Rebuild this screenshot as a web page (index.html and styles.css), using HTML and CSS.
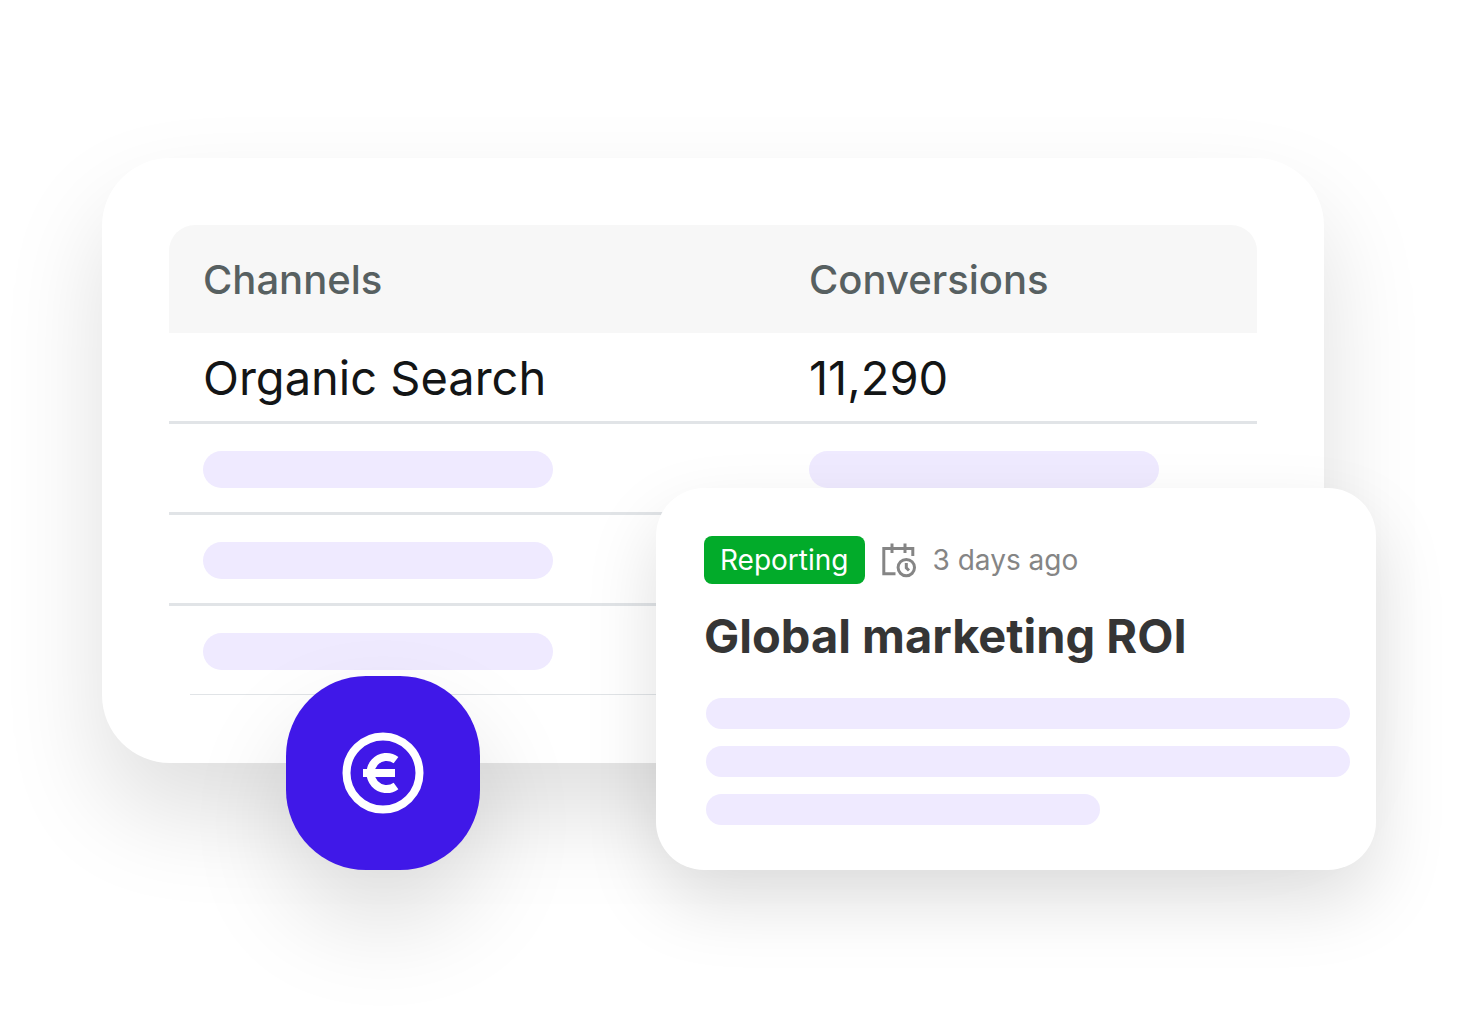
FILE: index.html
```html
<!DOCTYPE html>
<html lang="en">
<head>
    <meta charset="utf-8">
    <title>Global marketing ROI</title>
    <link rel="stylesheet" href="styles.css">
</head>
<body>
    <main class="page">
        <section class="card">
            <table class="channels">
                <thead>
                    <tr>
                        <th class="channel" scope="col">Channels</th>
                        <th scope="col">Conversions</th>
                    </tr>
                </thead>
                <tbody>
                    <tr>
                        <td>Organic Search</td>
                        <td>11,290</td>
                    </tr>
                    <tr>
                        <td><div class="bar"></div></td>
                        <td><div class="bar"></div></td>
                    </tr>
                    <tr>
                        <td><div class="bar"></div></td>
                        <td><div class="bar"></div></td>
                    </tr>
                    <tr>
                        <td><div class="bar"></div></td>
                        <td><div class="bar"></div></td>
                    </tr>
                </tbody>
            </table>
            <div class="table-end"></div>

            <div class="euro">
                <svg width="82" height="82" viewBox="0 0 82 82" fill="none" stroke="#fff" stroke-width="8">
                    <circle cx="41" cy="41" r="36.5"/>
                    <path d="M54 28.1A16 16 0 1 0 54 53.9"/>
                    <path d="M21 41H53"/>
                </svg>
            </div>

            <article class="report">
                <div class="meta">
                    <span class="tag">Reporting</span>
                    <svg width="36" height="36" viewBox="0 0 36 36" fill="none" stroke="#858585" stroke-width="3">
                        <path d="M14.5 31.8H2.8V6.5H31.8V14M11 1.5V11M24 1.5V11"/>
                        <circle cx="25.3" cy="25.6" r="8.2"/>
                        <path d="M25.3 21V25.8L28 28.5"/>
                    </svg>
                    <span class="date">3 days ago</span>
                </div>
                <h2>Global marketing ROI</h2>
                <div class="lines">
                    <div class="line"></div>
                    <div class="line"></div>
                    <div class="line short"></div>
                </div>
            </article>
        </section>
    </main>
</body>
</html>
```
FILE: styles.css
```css
body {
    margin: 0;
    background: #fff;
    font-family: Inter, "Liberation Sans", sans-serif;
}
.page {
    box-sizing: border-box;
    min-height: 100vh;
    padding: 158px 154px 107px 102px;
    overflow: hidden;
}
.card, .euro {
    background: #fff;
    box-shadow: 0 50px 100px rgba(0, 0, 0, 0.13);
}
.card {
    position: relative;
    padding: 67px 67px 68px;
    border-radius: 68px;
}
.channels {
    width: 100%;
    table-layout: fixed;
    border-collapse: separate;
    border-spacing: 0;
    text-align: left;
}
.channels th {
    height: 108px;
    padding: 0 0 0 34px;
    background: #f7f7f7;
    color: #576061;
    font-size: 40px;
    font-weight: 500;
}
.channels th:first-child {
    border-top-left-radius: 26px;
}
.channels th:last-child {
    border-top-right-radius: 26px;
}
.channels .channel {
    width: 572px;
}
.channels td {
    height: 86px;
    padding: 2px 0 0 34px;
    border-bottom: 3px solid #e1e4e7;
    color: #131516;
    font-size: 47px;
    line-height: 58px;
}
.channels tr:last-child td {
    border-bottom: none;
}
.bar {
    max-width: 350px;
    height: 37px;
    border-radius: 19px;
    background: #efeaff;
}
.table-end {
    height: 1px;
    margin-left: 21px;
    background: #e1e4e7;
}

/* floating items */
.euro {
    position: absolute;
    left: 184px;
    bottom: -107px;
    display: flex;
    align-items: center;
    justify-content: center;
    width: 194px;
    height: 194px;
    border-radius: 80px;
    background: #4018e8;
}
.report {
    position: absolute;
    top: 330px;
    right: -52px;
    box-sizing: border-box;
    width: 720px;
    padding: 48px 26px 45px 48px;
    border-radius: 48px;
    background: #fff;
    box-shadow: 0 32px 72px rgba(0, 0, 0, 0.13);
}
.meta {
    display: flex;
    align-items: center;
    gap: 16px;
    font-size: 28px;
}
.tag {
    padding: 0 16px;
    border-radius: 8px;
    background: #02ab2a;
    color: #fff;
    line-height: 48px;
}
.date {
    color: #858585;
}
.report h2 {
    margin: 23px 0 33px;
    color: #353535;
    font-size: 47px;
    font-weight: 700;
    line-height: 58px;
}
.lines {
    display: flex;
    flex-direction: column;
    gap: 17px;
    padding-left: 2px;
}
.line {
    height: 31px;
    border-radius: 16px;
    background: #efeaff;
}
.short {
    width: 394px;
}
```
